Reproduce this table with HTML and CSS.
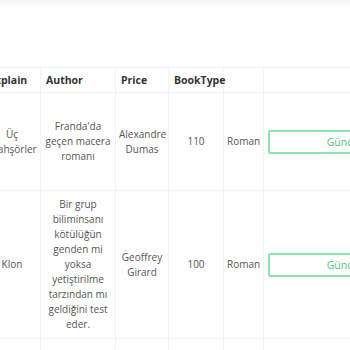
FILE: index.html
```html
<!DOCTYPE html>
<html lang="tr">
<head>
    <meta charset="UTF-8">
    <meta name="viewport" content="width=device-width, initial-scale=1.0">
    <title>Kitaplar</title>
    <link rel="stylesheet" href="styles.css">
</head>
<body>

<!-- Top bar shadow -->
<div class="top-shade"></div>

<div class="table-wrap">
    <table class="book-table">
        <colgroup>
            <col class="col-name">
            <col class="col-explain">
            <col class="col-author">
            <col class="col-price">
            <col class="col-type">
            <col class="col-action">
        </colgroup>
        <thead>
            <tr>
                <th>Explain</th>
                <th>Author</th>
                <th>Price</th>
                <th>BookType</th>
                <th></th>
                <th></th>
            </tr>
        </thead>
        <tbody>
            <tr class="row-tall">
                <td>Üç Silahşörler</td>
                <td>Franda'da geçen macera romanı</td>
                <td>Alexandre Dumas</td>
                <td>110</td>
                <td>Roman</td>
                <td class="cell-action"><button type="button" class="btn-update">Güncelle</button></td>
            </tr>
            <tr>
                <td>Klon</td>
                <td>Bir grup biliminsanı kötülüğün genden mi yoksa yetiştirilme tarzından mı geldiğini test eder.</td>
                <td>Geoffrey Girard</td>
                <td>100</td>
                <td>Roman</td>
                <td class="cell-action"><button type="button" class="btn-update">Güncelle</button></td>
            </tr>
            <tr>
                <td></td>
                <td></td>
                <td></td>
                <td></td>
                <td></td>
                <td></td>
            </tr>
        </tbody>
    </table>
</div>

</body>
</html>
```

FILE: styles.css
```css
/* Basic Reset */
* {
    box-sizing: border-box;
    margin: 0;
    padding: 0;
}

body {
    font-family: "Open Sans", "Noto Sans", sans-serif;
    font-size: 10px;
    color: #555;
    background-color: #fff;
    overflow: hidden;
}

/* Shadow under the navbar */
.top-shade {
    height: 6px;
    background: linear-gradient(#f3f3f3, #fff);
}

/* Table */
.table-wrap {
    margin-top: 61px;
    margin-left: -17px;
}

.book-table {
    border-collapse: collapse;
    table-layout: fixed;
    width: 462px;
}

.col-name { width: 57px; }
.col-explain { width: 75px; }
.col-author { width: 53px; }
.col-price { width: 55px; }
.col-type { width: 40px; }
.col-action { width: 182px; }

.book-table th,
.book-table td {
    border: 1px solid #f3f3f3;
    line-height: 15px;
}

.book-table th {
    height: 25px;
    padding: 0 5px;
    text-align: left;
    font-weight: bold;
    font-size: 10.5px;
    color: #333;
}

.book-table td {
    padding: 6px 3px;
    text-align: center;
    vertical-align: middle;
}

.book-table td.cell-action {
    padding-left: 4px;
    text-align: left;
}

.book-table tr.row-tall td {
    height: 98px;
}

.book-table tbody tr:last-child td {
    height: 30px;
}

/* Update button */
.btn-update {
    width: 160px;
    height: 24px;
    border: 2px solid #8be3ad;
    border-radius: 2px;
    background-color: #fff;
    color: #4cc47c;
    font-family: inherit;
    font-size: 10.5px;
    cursor: pointer;
}
```
